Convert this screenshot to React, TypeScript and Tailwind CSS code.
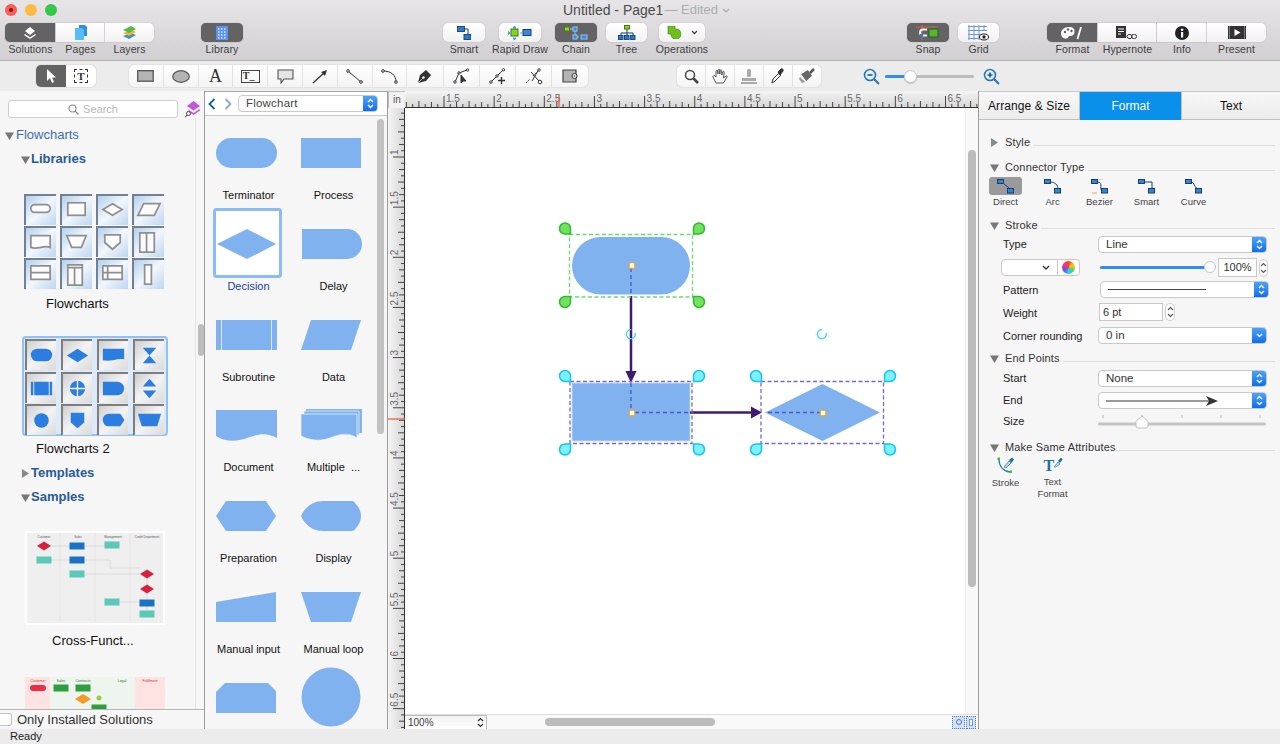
import React from "react";

const BLUE = "#7fb2ee";

function Chevrons() {
  return (
    <svg width="7" height="11" viewBox="0 0 7 11" fill="none" stroke="#fff" strokeWidth="1.4">
      <path d="M1 4 3.5 1.5 6 4M1 7 3.5 9.5 6 7" />
    </svg>
  );
}

function Select({ children, cls, single }: { children?: React.ReactNode; cls: string; single?: boolean }) {
  return (
    <div className={"flex items-center rounded-[4px] bg-white border border-[#c9c9c9] overflow-hidden text-[11.5px] text-[#333] " + cls}>
      <div className="flex-1 min-w-0 pl-[7px] pr-[4px] flex items-center">{children}</div>
      <div className="w-[14px] h-full bg-gradient-to-b from-[#4aa2fb] to-[#0d6fe8] flex items-center justify-center shrink-0">
        {single ? (
          <svg width="7" height="5" viewBox="0 0 7 5" fill="none" stroke="#fff" strokeWidth="1.4"><path d="M1 1 3.5 3.5 6 1" /></svg>
        ) : (
          <Chevrons />
        )}
      </div>
    </div>
  );
}

function Stepper({ cls }: { cls: string }) {
  return (
    <div className={"rounded-[5px] border border-[#cfcfcf] bg-white flex items-center justify-center shrink-0 " + cls}>
      <svg width="7" height="12" viewBox="0 0 7 12" fill="none" stroke="#555" strokeWidth="1.1"><path d="M1 4 3.5 1.5 6 4M1 8 3.5 10.5 6 8" /></svg>
    </div>
  );
}

function Tri({ open }: { open?: boolean }) {
  return (
    <svg width="9" height="9" viewBox="0 0 9 9" className="shrink-0">
      {open ? <polygon points="0,1.5 9,1.5 4.5,9" fill="#777" /> : <polygon points="1,0 8,4.5 1,9" fill="#888" />}
    </svg>
  );
}

/* ------- top toolbar ------- */
function TopBtn({ w, label, active, children, seg, first, last }: { w: string; label: string; active?: boolean; children: React.ReactNode; seg?: boolean; first?: boolean; last?: boolean }) {
  const radius = seg ? (first ? "rounded-l-[5px]" : last ? "rounded-r-[5px]" : "") : "rounded-[5px]";
  return (
    <div className={"flex flex-col items-center " + w}>
      <div className={"w-full h-[19px] flex items-center justify-center shadow-[0_0_1px_#00000066] " + radius + (active ? " bg-[#636363]" : " bg-gradient-to-b from-white to-[#f1f1f1]") + (seg && !last ? " border-r border-[#dcdcdc]" : "")}>
        {children}
      </div>
      <div className="text-[10.5px] leading-[14px] tracking-[0.1px] text-[#3d3d3d] whitespace-nowrap">{label}</div>
    </div>
  );
}

const Box = ({ x, y, c = "#2f7ac8", w = 7, h = 5 }: { x: number; y: number; c?: string; w?: number; h?: number }) => (
  <rect x={x} y={y} width={w} height={h} fill={c} stroke="#123f78" strokeWidth="0.9" />
);

function TopBar() {
  return (
    <div className="h-[61px] bg-gradient-to-b from-[#e7e5e7] to-[#d1cfd1] border-b border-[#b3b3b3] shrink-0">
      <div className="h-[22px] flex items-center">
        <div className="w-[563px] flex items-center gap-[8px] pl-[5px] shrink-0 -mt-[2px]">
          <div className="w-[12px] h-[12px] rounded-full bg-[#fc5b57] flex items-center justify-center"><div className="w-[4px] h-[4px] rounded-full bg-[#7e1512]" /></div>
          <div className="w-[12px] h-[12px] rounded-full bg-[#fdbc40]" />
          <div className="w-[12px] h-[12px] rounded-full bg-[#34c84a]" />
        </div>
        <div className="flex items-center text-[14px] text-[#4a4a4a] whitespace-nowrap -mt-[2px]">
          Untitled - Page1<span className="text-[#adadad] text-[13px] ml-[1px]">— Edited</span>
          <svg width="8" height="5" viewBox="0 0 8 5" fill="none" stroke="#adadad" strokeWidth="1.2" className="ml-[4px]"><path d="M1 1 4 4 7 1" /></svg>
        </div>
      </div>
      <div className="flex pl-[5px] mt-px">
        <div className="flex w-[149px]">
          <TopBtn w="w-[51px]" label="Solutions" active seg first>
            <svg width="14" height="14" viewBox="0 0 14 14" fill="#fff"><path d="M7 1 12 5 7 9 2 5Z" /><path d="M2 8 7 11.3 12 8 13 9 7 13 1 9Z" /></svg>
          </TopBtn>
          <TopBtn w="w-[49px]" label="Pages" seg>
            <svg width="13" height="15" viewBox="0 0 13 15"><path d="M5 0h6l2 2v9H5z" fill="#2c8fe0" /><path d="M1 3h7l2 2v10H1z" fill="#56bdf5" /></svg>
          </TopBtn>
          <TopBtn w="w-[49px]" label="Layers" seg last>
            <svg width="15" height="14" viewBox="0 0 15 14"><path d="M1 10 9 7l5 2-7 4z" fill="#3a8ad8" /><path d="M1 7 9 4l5 2-7 4z" fill="#f0b429" /><path d="M1 4 9 0l5 3-7 4z" fill="#58b947" /></svg>
          </TopBtn>
        </div>
        <div className="ml-[47px]">
          <TopBtn w="w-[42px]" label="Library" active>
            <svg width="12" height="14" viewBox="0 0 12 14"><rect width="12" height="14" rx="1" fill="#5a93f5" /><path d="M2 3h1.500M5 3h1.500M8 3h1.500M2 6h1.500M5 6h1.500M8 6h1.500M2 9h1.500M5 9h1.500M8 9h1.500M2 12h1.500M5 12h1.500M8 12h1.500" stroke="#dbe8ff" strokeWidth="1.5" /></svg>
          </TopBtn>
        </div>
        <div className="ml-[200px]">
          <TopBtn w="w-[42px]" label="Smart">
            <svg width="14" height="14" viewBox="0 0 14 14" fill="none"><path d="M7 3h4v6" stroke="#123f78" /><Box x={0.5} y={0.5} /><Box x={7} y={8.5} /></svg>
          </TopBtn>
        </div>
        <div className="ml-[14px]">
          <TopBtn w="w-[42px]" label="Rapid Draw">
            <svg width="24" height="14" viewBox="0 0 24 14"><path d="M5 2 6.500 0 8 2zM5 12l1.500 2L8 12zM2 7l-2-1.500V8.500zM12 7h2" fill="#36a3e8" stroke="#36a3e8" /><rect x="3" y="3" width="7" height="7" fill="#8bd11f" stroke="#3e7a12" /><rect x="15" y="3.500" width="8" height="6" fill="#3b87d8" stroke="#123f78" /></svg>
          </TopBtn>
        </div>
        <div className="ml-[14px]">
          <TopBtn w="w-[42px]" label="Chain" active>
            <svg width="24" height="14" viewBox="0 0 24 14" fill="none"><path d="M6 3h5v8h4" stroke="#8fc7f5" /><rect x="0.500" y="1" width="5" height="4" fill="#9bd11f" stroke="#4a7a12" /><rect x="9" y="9" width="4" height="4" fill="#3b87d8" stroke="#8fc7f5" /><rect x="17" y="9" width="6" height="4" fill="#3b87d8" stroke="#8fc7f5" /><rect x="9" y="1" width="4" height="4" fill="#3b87d8" stroke="#8fc7f5" /></svg>
          </TopBtn>
        </div>
        <div className="ml-[9px]">
          <TopBtn w="w-[41px]" label="Tree">
            <svg width="18" height="15" viewBox="0 0 18 15" fill="none"><path d="M9 4v4M3 12V8h12v4M9 8v4" stroke="#123f78" /><rect x="6.500" y="0.500" width="5" height="3.500" fill="#8bd11f" stroke="#3e7a12" /><Box x={0.5} y={10.5} w={4.5} h={4} /><Box x={6.5} y={10.5} w={4.5} h={4} /><Box x={12.5} y={10.5} w={4.5} h={4} /></svg>
          </TopBtn>
        </div>
        <div className="ml-[12px]">
          <TopBtn w="w-[46px]" label="Operations">
            <div className="flex items-center gap-[9px]">
              <svg width="15" height="13" viewBox="0 0 15 13"><path d="M1 0h7v3h1a5 5 0 1 1-5 6v-1H1z" fill="#6fc01e" stroke="#3e7a12" strokeWidth="0.6" /></svg>
              <svg width="7" height="5" viewBox="0 0 7 5" fill="none" stroke="#444" strokeWidth="1.3"><path d="M1 1 3.500 3.500 6 1" /></svg>
            </div>
          </TopBtn>
        </div>
        <div className="ml-[202px]">
          <TopBtn w="w-[42px]" label="Snap" active>
            <svg width="24" height="15" viewBox="0 0 24 15" fill="none"><path d="M0 2h22M6 0v15" stroke="#d9694a" /><path d="M11 4.500H7a3 3 0 0 0 0 6h4" stroke="#eee" strokeWidth="2" /><rect x="4" y="9" width="3" height="3" fill="#2f7ac8" /><rect x="13" y="4" width="9" height="8" fill="#60b224" stroke="#163" /></svg>
          </TopBtn>
        </div>
        <div className="ml-[9px]">
          <TopBtn w="w-[41px]" label="Grid">
            <svg width="21" height="16" viewBox="0 0 21 16" fill="none"><path d="M0 1.500h19M0 5.500h19M0 9.500h13M0 13.500h11M1 0v15M6 0v15M11 0v15M16 0v6" stroke="#6c94e3" /><ellipse cx="16" cy="12" rx="4.500" ry="3" fill="#fff" stroke="#222" /><circle cx="16" cy="12" r="1.700" fill="#222" /></svg>
          </TopBtn>
        </div>
        <div className="flex ml-[48px]">
          <TopBtn w="w-[51px]" label="Format" active seg first>
            <svg width="22" height="14" viewBox="0 0 22 14"><path d="M8 1C3 1 0 4 0 7.500S3 13 5.500 12.500 7 10 8.500 10 13 10 13.500 6 11 1 8 1Z" fill="#fff" /><circle cx="4" cy="6" r="1.200" fill="#636363" /><circle cx="7" cy="3.500" r="1.200" fill="#636363" /><circle cx="10.500" cy="5" r="1.200" fill="#636363" /><path d="M20 1 16.500 13" stroke="#fff" strokeWidth="1.800" /></svg>
          </TopBtn>
          <TopBtn w="w-[59px]" label="Hypernote" seg>
            <svg width="22" height="14" viewBox="0 0 22 14" fill="none"><rect x="0" y="0" width="10" height="12" fill="#333" /><path d="M2 3h6M2 5.500h6M2 8h3" stroke="#fff" /><rect x="11" y="8.500" width="5" height="4" rx="2" stroke="#333" /><rect x="15.500" y="8.500" width="5" height="4" rx="2" stroke="#333" /></svg>
          </TopBtn>
          <TopBtn w="w-[50px]" label="Info" seg>
            <svg width="14" height="14" viewBox="0 0 14 14"><circle cx="7" cy="7" r="7" fill="#222" /><rect x="6" y="6" width="2.200" height="5.500" fill="#fff" /><circle cx="7.100" cy="3.700" r="1.300" fill="#fff" /></svg>
          </TopBtn>
          <TopBtn w="w-[59px]" label="Present" seg last>
            <svg width="18" height="13" viewBox="0 0 18 13"><rect width="18" height="13" fill="#333" /><polygon points="6.500,3 12.500,6.500 6.500,10" fill="#fff" /><rect x="1" y="0" width="1" height="13" fill="#777" /><rect x="16" y="0" width="1" height="13" fill="#777" /></svg>
          </TopBtn>
        </div>
      </div>
    </div>
  );
}

/* ------- second toolbar ------- */
const toolIconsA: React.ReactNode[] = [
  <svg key="0" width="17" height="12" viewBox="0 0 17 12"><rect x="0.700" y="0.700" width="15.500" height="10.500" fill="#b4b4b4" stroke="#555" strokeWidth="1.300" /></svg>,
  <svg key="1" width="18" height="13" viewBox="0 0 18 13"><ellipse cx="9" cy="6.500" rx="8.300" ry="5.800" fill="#b4b4b4" stroke="#555" strokeWidth="1.200" /></svg>,
  <span key="2" className="font-['Liberation_Serif',serif] text-[18px] leading-none text-[#333]">A</span>,
  <div key="3" className="w-[19px] h-[13px] border border-[#444] flex items-center pl-[1px] font-['Liberation_Serif',serif] text-[10px] font-bold leading-none text-[#333]">T_</div>,
  <svg key="4" width="17" height="15" viewBox="0 0 17 15"><path d="M1 1h15v9H7l-3 4v-4H1z" fill="#e5e5e5" stroke="#555" strokeWidth="1.100" /></svg>,
  <svg key="5" width="16" height="15" viewBox="0 0 16 15" fill="none"><path d="M1 14 13 3" stroke="#333" strokeWidth="1.300" /><polygon points="15,1 9,3 13,7" fill="#333" /></svg>,
  <svg key="6" width="17" height="15" viewBox="0 0 17 15" fill="none" stroke="#333"><path d="M2 2 15 13" /><circle cx="2" cy="2" r="1.300" fill="#fff" /><circle cx="15" cy="13" r="1.300" fill="#fff" /></svg>,
  <svg key="7" width="17" height="15" viewBox="0 0 17 15" fill="none" stroke="#333"><path d="M2 2C10 2 15 6 15 13" /><circle cx="2" cy="2" r="1.300" fill="#fff" /><circle cx="15" cy="13" r="1.300" fill="#fff" /></svg>,
];
const toolIconsB: React.ReactNode[] = [
  <svg key="0" width="16" height="16" viewBox="0 0 16 16"><path d="M1 15 3 7 9 2l5 5-5 6z" fill="#333" /><circle cx="6.500" cy="9.500" r="1.200" fill="#fff" /><path d="M1 15 6 10" stroke="#fff" strokeWidth="0.600" /></svg>,
  <svg key="1" width="17" height="16" viewBox="0 0 17 16" fill="none" stroke="#333"><path d="M2 14 6 5 14 2" /><circle cx="2" cy="14" r="1.200" fill="#fff" /><circle cx="6" cy="5" r="1.200" fill="#fff" /><circle cx="14.500" cy="2" r="1.200" fill="#fff" /><path d="M8 7v8l2-2h3z" fill="#333" /></svg>,
  <svg key="2" width="17" height="16" viewBox="0 0 17 16" fill="none" stroke="#333"><path d="M2 14 14 2" /><circle cx="2" cy="14" r="1.200" fill="#fff" /><circle cx="8" cy="8" r="1.200" fill="#fff" /><circle cx="14.500" cy="1.800" r="1.200" fill="#fff" /><path d="M9 12.500h7M12.500 9v7" strokeWidth="1.400" /></svg>,
  <svg key="3" width="18" height="17" viewBox="0 0 18 17" fill="none" stroke="#333"><path d="M1 15 5 11M8 8l4-4" strokeDasharray="2 1" /><path d="M14 1 7 13M6 4l8 9" /><circle cx="15" cy="14" r="1.800" fill="#fff" /><circle cx="14" cy="2" r="1.200" fill="#fff" /></svg>,
  <svg key="4" width="16" height="14" viewBox="0 0 16 14"><path d="M1 1h13v12H1z" fill="#b4b4b4" stroke="#444" strokeWidth="1.200" /><circle cx="12.500" cy="7" r="2.500" fill="#eee" stroke="#333" /><circle cx="12.500" cy="7" r="0.700" fill="#333" /></svg>,
];
const toolIconsC: React.ReactNode[] = [
  <svg key="0" width="15" height="15" viewBox="0 0 15 15" fill="none"><circle cx="6" cy="6" r="4.500" fill="#fff" stroke="#444" strokeWidth="1.500" /><path d="M9.500 9.500 14 14" stroke="#444" strokeWidth="2.500" /></svg>,
  <svg key="1" width="16" height="16" viewBox="0 0 16 16" fill="#f7f7f7" stroke="#444" strokeWidth="0.900"><path d="M4 15 1 9c-.5-1 1-2 2-1l1 1V3c0-1 1.500-1 1.600 0l.4 3V2c0-1 1.500-1 1.600 0l.2 4 .4-3.500c.1-1 1.500-1 1.500 0L9.800 7l1-3c.3-1 1.700-.6 1.500.5l-1 5.500L14 8c1-.6 1.500.4 1 1l-3.500 6z" /></svg>,
  <svg key="2" width="16" height="15" viewBox="0 0 16 15" fill="#aaa"><rect x="6" y="0" width="4" height="8" rx="1.500" /><path d="M1 9h14v3H1z" /><rect x="0" y="13" width="16" height="2" /></svg>,
  <svg key="3" width="14" height="16" viewBox="0 0 14 16" fill="none"><path d="M1 15 2 11 8 5l2 2-6 6z" fill="#fff" stroke="#333" /><path d="M7 4 10 1c1-1 3 1 2 2L9 7z" fill="#333" stroke="#333" /></svg>,
  <svg key="4" width="16" height="16" viewBox="0 0 16 16"><path d="M8 2l5 5-5 6-6-6z" fill="#666" transform="rotate(8 8 8)" /><path d="M11 5 15 1" stroke="#555" strokeWidth="2.500" /><path d="M1 9l5 5-3 1-3-4z" fill="#999" /></svg>,
];

function ToolBar2() {
  return (
    <div className="h-[30px] bg-[#ececec] shrink-0 flex items-center pl-[36px]">
      <div className="flex h-[22px] rounded-[5px] shadow-[0_0_1px_#00000066] overflow-hidden bg-white">
        <div className="w-[30px] bg-[#636363] flex items-center justify-center">
          <svg width="10" height="14" viewBox="0 0 10 14" fill="#fff"><path d="M1 0v12l3-3 2 5 2-1-2-4.500h4z" /></svg>
        </div>
        <div className="w-[30px] flex items-center justify-center">
          <div className="w-[14px] h-[14px] border border-dashed border-[#333] flex items-center justify-center font-['Liberation_Serif',serif] text-[11px] font-bold text-[#333] leading-none">T</div>
        </div>
      </div>
      <div className="ml-[33px] flex h-[22px] rounded-[5px] shadow-[0_0_1px_#00000066] bg-gradient-to-b from-white to-[#f4f4f4]">
        {toolIconsA.map((ic, i) => (
          <div key={i} className="w-[34.8px] flex items-center justify-center border-r border-[#e2e2e2]">{ic}</div>
        ))}
        {toolIconsB.map((ic, i) => (
          <div key={i} className="w-[36.2px] flex items-center justify-center border-r border-[#e2e2e2] last:border-r-0">{ic}</div>
        ))}
      </div>
      <div className="ml-[89px] flex h-[22px] rounded-[5px] shadow-[0_0_1px_#00000066] bg-gradient-to-b from-white to-[#f4f4f4]">
        {toolIconsC.map((ic, i) => (
          <div key={i} className="w-[28.8px] flex items-center justify-center border-r border-[#e2e2e2] last:border-r-0">{ic}</div>
        ))}
      </div>
      <svg width="17" height="17" viewBox="0 0 17 17" fill="none" className="ml-[42px]"><circle cx="7" cy="7" r="5.500" fill="#e5eef8" stroke="#2d77b8" strokeWidth="1.600" /><path d="M4.500 7h5" stroke="#1d5a9e" strokeWidth="1.600" /><path d="M11 11l5 5" stroke="#2d77b8" strokeWidth="2.200" /></svg>
      <div className="ml-[5px] relative w-[89px] h-[3px] rounded-full bg-[#bdbdbd]">
        <div className="w-[20px] h-[3px] rounded-l-full bg-[#2f8ff0]" />
        <div className="absolute left-[19px] -top-[5px] w-[13px] h-[13px] rounded-full bg-white border border-[#c8c8c8] shadow-[0_1px_1px_#0000002e]" />
      </div>
      <svg width="17" height="17" viewBox="0 0 17 17" fill="none" className="ml-[9px]"><circle cx="7" cy="7" r="5.500" fill="#e5eef8" stroke="#2d77b8" strokeWidth="1.600" /><path d="M4.500 7h5M7 4.500v5" stroke="#1d5a9e" strokeWidth="1.600" /><path d="M11 11l5 5" stroke="#2d77b8" strokeWidth="2.200" /></svg>
    </div>
  );
}

/* ------- solutions panel ------- */
const outline = "#8f8f8f";
const g1: React.ReactNode[] = [
  <rect key="a" x="5" y="9" width="20" height="8" rx="4" />,
  <rect key="b" x="6" y="7" width="18" height="13" />,
  <polygon key="c" points="5,14 15,8 25,14 15,20" />,
  <polygon key="d" points="4,20 10,8 27,8 21,20" />,
  <path key="e" d="M5 8h20v12c-7-3-12 3-20 0z" />,
  <polygon key="f" points="5,8 25,8 20,20 10,20" />,
  <polygon key="g" points="7,7 23,7 23,15 15,22 7,15" />,
  <path key="h" d="M6 5h15v20H6zM13 5v20" />,
  <path key="i" d="M5 6h20v14H5zM5 13h20" />,
  <path key="j" d="M6 5h15v21H6zM13 8v18M6 8h15" />,
  <path key="k" d="M5 6h20v14H5zM5 13h20M10 6v14" />,
  <rect key="l" x="11" y="5" width="7" height="20" />,
];
const g2: React.ReactNode[] = [
  <rect key="a" x="4" y="8" width="22" height="13" rx="6.500" />,
  <polygon key="b" points="4,15 15,8 26,15 15,22" />,
  <path key="c" d="M4 8h22v11c-8-2-12 3-22 1z" />,
  <path key="d" d="M8 7h14L15 15l7 8H8l7-8z" />,
  <path key="e" fillRule="evenodd" d="M4 8h22v14H4zM6.500 8v14h1V8zM22.500 8v14h1V8z" />,
  <path key="f" fillRule="evenodd" d="M15 7a8 8 0 1 1 0 16 8 8 0 0 1 0-16zM14.300 7v7.300H7v1.400h7.300V23h1.400v-7.300H23v-1.400h-7.300V7z" />,
  <path key="g" d="M4 8h15a7 7 0 0 1 0 14H4z" />,
  <path key="h" d="M15 5 22 13H8zM15 25 8 17h14z" />,
  <circle key="i" cx="15" cy="15" r="7.500" />,
  <polygon key="j" points="8,7 22,7 22,17 15,23 8,17" />,
  <path key="k" d="M10 8h12l4 6v1l-4 6H10a6 6 0 0 1-6-6.500A6 6 0 0 1 10 8z" />,
  <polygon key="l" points="3,8 27,8 23,21 7,21" />,
];

function Thumbs1() {
  return (
    <div className="ml-[24px] grid grid-cols-[repeat(4,31.500px)] gap-x-[4.500px] gap-y-px w-fit">
      {g1.map((s, i) => (
        <div key={i} className="h-[31px] bg-gradient-to-br from-[#b4cfec] via-[#f2f7fc] to-[#bcd5ee] border-t-2 border-l-2 border-[#6f8192]">
          <svg width="29" height="29" viewBox="0 0 30 30" fill="#fbfbfb" stroke={outline} strokeWidth="1.800">{s}</svg>
        </div>
      ))}
    </div>
  );
}

function Thumbs2() {
  return (
    <div className="ml-[22px] w-[146px] h-[100px] rounded-[4px] border-2 border-[#8fc0f7] bg-[#dbe9f8] pt-[1px] pl-[1px] grid grid-cols-[repeat(4,31px)] gap-x-[5px] gap-y-[1.500px]">
      {g2.map((s, i) => (
        <div key={i} className="h-[31px] bg-gradient-to-br from-[#cfcfcf] via-[#f4f4f4] to-[#d9d9d9] border-t-2 border-l-2 border-[#7e7e7e]">
          <svg width="29" height="29" viewBox="0 0 30 30" fill="#2b7de0">{s}</svg>
        </div>
      ))}
    </div>
  );
}

const T = ({ x, y, c = "#5cc8b8", w = 15, h = 7 }: { x: number; y: number; c?: string; w?: number; h?: number }) => <rect x={x - w / 2} y={y - h / 2} width={w} height={h} fill={c} />;
const D = ({ x, y, c = "#d8203d" }: { x: number; y: number; c?: string }) => <polygon points={`${x - 7},${y} ${x},${y - 4.500} ${x + 7},${y} ${x},${y + 4.500}`} fill={c} />;

function SolutionsPanel() {
  return (
    <div className="w-[205px] shrink-0 border-r border-[#9c9c9c] bg-[#f6f6f6] flex flex-col relative">
      <div className="h-[27px] shrink-0 flex items-end pl-[8px]">
        <div className="w-[170px] h-[18px] bg-white rounded-[3px] border border-[#cfcfcf] flex items-center justify-center gap-[4px] text-[11px] text-[#b9b9b9]">
          <svg width="11" height="11" viewBox="0 0 11 11" fill="none" stroke="#888" strokeWidth="1.100"><circle cx="4.500" cy="4.500" r="3.500" /><path d="M7 7l3.500 3.500" /></svg>
          Search
        </div>
        <svg width="15" height="17" viewBox="0 0 15 17" className="ml-[7px]"><path d="M8.500 0 15 5l-6.500 4.500L2 5z" fill="#c454d8" /><path d="M2.500 8 8.500 12l6-4 .5 1.500L8.500 14 5 11.500z" fill="#c454d8" /><circle cx="3.500" cy="12.500" r="2" fill="#fff" stroke="#333" strokeWidth="0.900" /><path d="M2 14 0 16.500" stroke="#333" strokeWidth="1" /></svg>
      </div>
      <div className="flex-1 min-h-0 overflow-hidden border-r border-[#e4e4e4] w-[196px]">
        <div className="mt-[9px] h-[16px] pl-[5px] flex items-center gap-[2px] text-[13px] text-[#3d6fa8]"><Tri open />Flowcharts</div>
        <div className="mt-[8px] h-[16px] pl-[21px] flex items-center gap-[1px] text-[13px] font-bold text-[#285a9c]"><Tri open />Libraries</div>
        <div className="mt-[27px]"><Thumbs1 /></div>
        <div className="mt-[8px] pl-[46px] h-[14px] text-[13px] leading-[14px] text-[#111]">Flowcharts</div>
        <div className="mt-[25px]"><Thumbs2 /></div>
        <div className="mt-[6px] pl-[36px] h-[14px] text-[13px] leading-[14px] text-[#111]">Flowcharts 2</div>
        <div className="mt-[9px] h-[16px] pl-[21px] flex items-center gap-[1px] text-[13px] font-bold text-[#285a9c]"><Tri />Templates</div>
        <div className="mt-[8px] h-[16px] pl-[21px] flex items-center gap-[1px] text-[13px] font-bold text-[#285a9c]"><Tri open />Samples</div>
        <div className="mt-[26px] ml-[25px] w-[140px] h-[94px] border-2 border-white bg-[#efefef]">
          <svg width="136" height="90" viewBox="2 2 136 90">
            <g fontSize="3" fill="#555" fontFamily="Liberation Sans, sans-serif" textAnchor="middle"><text x="19" y="7">Customer</text><text x="53" y="7">Sales</text><text x="88" y="7">Management</text><text x="122" y="7">Credit Department</text></g>
            <path d="M35 2v90M70 2v90M105 2v90" stroke="#e4e4e4" />
            <path d="M26 15h19M60 15h22M26 29h19M60 43h55M60 29h25V37h30M122 47v7M122 62v6M95 71h20M122 76v3" stroke="#cfcfcf" strokeWidth="0.600" fill="none" />
            <D x={19} y={15} /><T x={52} y={15} c="#1a72c4" /><T x={87} y={14} /><T x={19} y={29} /><T x={52} y={29} c="#1a72c4" /><T x={52} y={43} /><D x={122} y={43} /><D x={122} y={58} /><T x={122} y={72} c="#1a72c4" /><T x={87} y={71} /><T x={122} y={83} />
          </svg>
        </div>
        <div className="mt-[8px] pl-[52px] h-[15px] text-[13px] leading-[15px] text-[#111]">Cross-Funct...</div>
        <div className="mt-[29px] ml-[25px] w-[140px] h-[94px] flex relative">
          <svg width="140" height="94" viewBox="0 0 140 94">
            <rect width="140" height="94" fill="#eef5ee" /><rect width="25" height="94" fill="#ffe3e3" /><rect x="110" width="30" height="94" fill="#ffe3e3" />
            <g fontSize="3.500" fontFamily="Liberation Sans, sans-serif" textAnchor="middle" fill="#c33"><text x="13" y="5">Customer</text><text x="36" y="5" fill="#373">Sales</text><text x="58" y="5" fill="#373">Contracts</text><text x="97" y="5" fill="#373">Legal</text><text x="125" y="5">Fulfilment</text></g>
            <rect x="5" y="8" width="16" height="6" rx="3" fill="#ef2b45" /><T x={36} y={11} c="#2f9e3f" /><T x={58} y={11} c="#2f9e3f" />
            <polygon points="50,22 58,17 66,22 58,27" fill="#f59a23" /><circle cx="74" cy="21" r="2.500" fill="#9ccc3c" /><T x={74} y={31} c="#2f9e3f" />
          </svg>
        </div>
      </div>
      <div className="absolute left-[198px] top-[233px] w-[6px] h-[32px] rounded-full bg-[#bdbdbd]" />
      <div className="absolute left-0 right-0 bottom-0 h-[20px] bg-[#f6f6f6] border-t border-[#b5b5b5] flex items-center">
        <div className="w-[12px] h-[13px] bg-white border border-[#c2c2c2] border-l-0 rounded-r-[3px]" />
        <span className="ml-[5px] text-[13px] text-[#333] whitespace-nowrap">Only Installed Solutions</span>
      </div>
    </div>
  );
}

/* ------- library ------- */
const S = { fill: BLUE };
const shapes: { label: string; el: React.ReactNode; blue?: boolean }[] = [
  { label: "Terminator", el: <rect x="0" y="16" width="61" height="30" rx="15" {...S} /> },
  { label: "Process", el: <rect x="0" y="16" width="60" height="30" {...S} /> },
  { label: "Decision", blue: true, el: <><rect x="-1.500" y="-3.500" width="66" height="67" rx="2" fill="#fff" stroke="#8cbcf5" strokeWidth="3" /><polygon points="1,31 31,16 60,31 31,46" {...S} /></> },
  { label: "Delay", el: <path d="M1 16H46A15 15 0 0 1 46 46H1Z" {...S} /> },
  { label: "Subroutine", el: <><rect x="0" y="16" width="61" height="30" {...S} /><path d="M5.500 16v30M55.500 16v30" stroke="#dceafb" strokeWidth="1" /></> },
  { label: "Data", el: <polygon points="0,46 10,16 60,16 50,46" {...S} /> },
  { label: "Document", el: <path d="M0 16H61V44C50 38 42 40 31 44C20 48 10 48 0 42Z" {...S} /> },
  { label: "Multiple  ...", el: <><path d="M5 15H61V39H5Z" {...S} /><path d="M3 17H58V41H3Z" fill={BLUE} stroke="#f6f6f6" strokeWidth="0.700" /><path d="M0 20H56V44C47 38 40 40 29 44C18 48 8 46 0 42Z" fill={BLUE} stroke="#f6f6f6" strokeWidth="0.700" /></> },
  { label: "Preparation", el: <polygon points="0,31 10,16 50,16 60,31 50,46 10,46" {...S} /> },
  { label: "Display", el: <path d="M0 31C4 22 12 16 22 16H52C57 20 60 26 60 31C60 36 57 42 52 46H22C12 46 4 40 0 31Z" {...S} /> },
  { label: "Manual input", el: <polygon points="0,26 60,16 60,46 0,46" {...S} /> },
  { label: "Manual loop", el: <polygon points="0,16 60,16 50,46 10,46" {...S} /> },
  { label: "", el: <polygon points="0,25 9,16 52,16 60,24 60,46 0,46" {...S} /> },
  { label: "", el: <circle cx="30" cy="30" r="29.500" {...S} /> },
];

function LibraryPanel() {
  return (
    <div className="w-[183px] shrink-0 border-r border-[#9c9c9c] border-t border-t-[#a8a8a8] bg-[#f6f6f6] flex flex-col relative overflow-hidden">
      <div className="h-[24px] shrink-0 bg-white border-b border-[#c9c9c9] flex items-center">
        <svg width="8" height="12" viewBox="0 0 8 12" fill="none" stroke="#1d5a9e" strokeWidth="1.800" className="ml-[3px]"><path d="M6.500 1 1.500 6l5 5" /></svg>
        <svg width="8" height="12" viewBox="0 0 8 12" fill="none" stroke="#8fa9c9" strokeWidth="1.800" className="ml-[8px]"><path d="M1.500 1l5 5-5 5" /></svg>
        <Select cls="ml-[6px] w-[140px] h-[17px]"><span className="text-[#444] tracking-[0.2px]">Flowchart</span></Select>
      </div>
      <div className="grid grid-cols-[85px_85px] pl-[1px]">
        {shapes.map((s, i) => (
          <div key={i} className="h-[90.8px] pt-[6px] flex flex-col items-center">
            <svg width="62" height="62" viewBox="0 0 62 62" className="mr-[4px] overflow-visible shrink-0">{s.el}</svg>
            {s.label && <div className={"mt-[4px] h-[14px] text-[11px] leading-[14px] whitespace-pre " + (s.blue ? "text-[#22409c]" : "text-[#111]")}>{s.label}</div>}
          </div>
        ))}
      </div>
      <div className="absolute left-[172px] top-[27px] w-[7px] h-[315px] rounded-full bg-[#c2c2c2]" />
    </div>
  );
}

/* ------- canvas ------- */
function TopRuler() {
  const els: React.ReactNode[] = [];
  for (let i = 18; i <= 110; i++) {
    const x = 39 + ((i / 16 - 1.5) * 100.3);
    const h = i % 8 === 0 ? 11 : i % 4 === 0 ? 6 : i % 2 === 0 ? 5 : 3;
    els.push(<line key={i} x1={x} x2={x} y1={16 - h} y2={16} stroke="#333" strokeWidth="0.900" />);
    if (i % 8 === 0) {
      els.push(<text key={"t" + i} x={x + 2} y={11} fontSize="10" fill="#6a6a6a" fontFamily="Liberation Sans, sans-serif">{String(i / 16)}</text>);
    }
  }
  return (
    <svg width="573" height="17" viewBox="0 0 573 17" className="bg-gradient-to-b from-[#f4f4f4] to-[#d6d6d6]">
      {els}
      <line x1="0" x2="573" y1="16.500" y2="16.500" stroke="#333" />
      <line x1="154" x2="154" y1="3" y2="17" stroke="#e8553e" strokeWidth="1.200" />
    </svg>
  );
}

function LeftRuler() {
  const els: React.ReactNode[] = [];
  for (let i = 5; i <= 112; i++) {
    const y = 49 + ((i / 16 - 1) * 100.3);
    if (y > 621) break;
    const w = i % 8 === 0 ? 11 : i % 4 === 0 ? 6 : i % 2 === 0 ? 5 : 3;
    els.push(<line key={i} y1={y} y2={y} x1={16 - w} x2={16} stroke="#333" strokeWidth="0.900" />);
    if (i % 8 === 0 && y > 30 && y < 610) {
      els.push(<text key={"t" + i} transform={`translate(10 ${y - 2}) rotate(-90)`} fontSize="10" fill="#6a6a6a" fontFamily="Liberation Sans, sans-serif">{String(i / 16)}</text>);
    }
  }
  return (
    <svg width="17" height="621" viewBox="0 0 17 621" className="bg-gradient-to-r from-[#f4f4f4] to-[#d6d6d6] shrink-0">
      {els}
      <line y1="0" y2="621" x1="16.500" x2="16.500" stroke="#333" />
      <line x1="0" x2="17" y1="311" y2="311" stroke="#e8553e" strokeWidth="1.200" />
    </svg>
  );
}

const Handle = ({ x, y, rot, c }: { x: number; y: number; rot: number; c: "g" | "b" }) => (
  <path d="M0 0H-5.500A5.500 5.500 0 1 1 0 -5.500Z" transform={`translate(${x} ${y}) rotate(${rot})`} fill={c === "g" ? "#73e05f" : "#7df1ff"} stroke={c === "g" ? "#2dbd2d" : "#12c4f7"} strokeWidth="1.500" />
);
const Corners = ({ x1, y1, x2, y2, c }: { x1: number; y1: number; x2: number; y2: number; c: "g" | "b" }) => (
  <>
    <Handle x={x1} y={y1} rot={0} c={c} />
    <Handle x={x2} y={y1} rot={90} c={c} />
    <Handle x={x2} y={y2} rot={180} c={c} />
    <Handle x={x1} y={y2} rot={270} c={c} />
  </>
);
const Center = ({ x, y }: { x: number; y: number }) => <rect x={x - 2.800} y={y - 2.800} width="5.600" height="5.600" fill="#fff" stroke="#eba22b" strokeWidth="1.200" />;
const Rot = ({ x, y }: { x: number; y: number }) => <path d="M3.500 2.500A4.500 4.500 0 1 1 3.500 -2.500" transform={`translate(${x} ${y}) rotate(-50)`} fill="none" stroke="#33d6f5" strokeWidth="1.300" />;

function Diagram() {
  // Coordinates are page coordinates translated to the canvas origin (405,108)
  return (
    <svg width="560" height="606" viewBox="405 108 560 606" className="absolute left-0 top-0">
      <rect x="572" y="237" width="118" height="57.500" rx="28.700" fill={BLUE} />
      <rect x="572" y="383" width="118" height="58" fill={BLUE} stroke="#cbdff8" strokeWidth="0.800" />
      <polygon points="765,412.500 822.500,384 880,412.500 822.500,441" fill={BLUE} />
      <path d="M631 296V371" stroke="#401a70" strokeWidth="2.500" />
      <polygon points="625.500,371 636.500,371 631,383" fill="#401a70" />
      <path d="M690 412.500H752" stroke="#401a70" strokeWidth="2.500" />
      <polygon points="751,406.500 751,418.500 762,412.500" fill="#401a70" />
      <rect x="569.500" y="234.500" width="123" height="62.500" fill="none" stroke="#6edb6e" strokeWidth="1.300" strokeDasharray="4 2.500" />
      <rect x="570" y="381.500" width="122" height="62" fill="none" stroke="#7466dc" strokeWidth="1.300" strokeDasharray="4 2.500" />
      <rect x="761" y="381.500" width="122.500" height="62" fill="none" stroke="#7466dc" strokeWidth="1.300" strokeDasharray="4 2.500" />
      <path d="M631 268V296M631 383V410M635 412.500H690M768 412.500H820" fill="none" stroke="#4f55d0" strokeWidth="1.300" strokeDasharray="4 3" />
      <Corners x1={570.500} y1={234} x2={693.500} y2={296.500} c="g" />
      <Corners x1={570.500} y1={381.500} x2={693.500} y2={444} c="b" />
      <Corners x1={761.500} y1={381.500} x2={884.500} y2={444} c="b" />
      <Center x={632} y={265.500} />
      <Center x={632} y={413} />
      <Center x={823} y={413} />
      <Rot x={631} y={334} />
      <Rot x={822} y={334} />
    </svg>
  );
}

function CanvasColumn() {
  return (
    <div className="w-[590px] shrink-0 flex flex-col bg-white">
      <div className="flex h-[17px] shrink-0">
        <div className="w-[17px] h-[17px] bg-[#f3f3f3] border-t border-l border-[#bdbdbd] flex items-center justify-center text-[10px] leading-[12px] text-[#555]">in</div>
        <TopRuler />
      </div>
      <div className="flex flex-1 min-h-0">
        <LeftRuler />
        <div className="flex-1 flex flex-col min-w-0">
          <div className="flex-1 flex min-h-0">
            <div className="flex-1 relative overflow-hidden"><Diagram /></div>
            <div className="w-[13px] bg-[#f8f8f8] border-l border-[#ededed] pl-[2px] shrink-0">
              <div className="mt-[42px] w-[8px] h-[437px] rounded-full bg-[#bcbcbc]" />
            </div>
          </div>
          <div className="h-[15px] shrink-0 bg-[#f9f9f9] border-t border-[#dedede] flex items-center relative">
            <div className="w-[82px] h-full bg-gradient-to-b from-[#f2f2f2] to-white border-r border-t border-[#bcbcbc] flex items-center justify-between pl-[3px] pr-[2px] text-[10px] text-[#444]">
              100%
              <svg width="7" height="11" viewBox="0 0 7 11" fill="none" stroke="#333" strokeWidth="1.200"><path d="M1 4 3.500 1.500 6 4M1 7 3.500 9.500 6 7" /></svg>
            </div>
            <div className="ml-[58px] w-[170px] h-[8px] rounded-full bg-[#bcbcbc]" />
            <div className="ml-[237px] flex items-center gap-[1px]">
              <div className="w-[13px] h-[13px] bg-[#cfe0f7] border border-dotted border-[#5577bb] flex items-center justify-center"><div className="w-[6px] h-[6px] rounded-full border border-[#5577bb]" /></div>
              <div className="w-[10px] h-[13px] bg-[#cfe0f7] border border-dotted border-[#5577bb] flex items-center justify-center"><div className="w-[4px] h-[7px] border border-[#7799cc] bg-white" /></div>
            </div>
          </div>
        </div>
      </div>
    </div>
  );
}

/* ------- format panel ------- */
function Heading({ label, open = true, cls }: { label: string; open?: boolean; cls: string }) {
  return (
    <div className={"h-[14px] flex items-center pl-[11px] text-[11px] text-[#333] " + cls}>
      <Tri open={open} />
      <span className="ml-[6px] whitespace-nowrap tracking-[0.15px]">{label}</span>
      <div className="flex-1 h-px bg-[#dddddd] ml-[3px] mr-[5px] mt-[7px]" />
    </div>
  );
}

const Lbl = ({ children }: { children: React.ReactNode }) => <div className="w-[119px] pl-[24px] shrink-0 text-[11px] text-[#222] whitespace-nowrap">{children}</div>;

const connIcons: { label: string; path: string; extra?: React.ReactNode }[] = [
  { label: "Direct", path: "M6 4 13 10" },
  { label: "Arc", path: "M6 3C11 3 14 6 14 10" },
  { label: "Bezier", path: "M6 3C14 3 6 12 13 12", extra: <path d="M8 0h4M1 14h5" stroke="#e89a2a" strokeWidth="0.800" /> },
  { label: "Smart", path: "M6 3H14V10" },
  { label: "Curve", path: "M6 3C10 3 9 10 14 10" },
];

function Conn({ i }: { i: number }) {
  const c = connIcons[i];
  return (
    <svg width="17" height="15" viewBox="0 0 17 15" fill="none">
      <path d={c.path} stroke="#123f78" strokeWidth="1" />
      {c.extra}
      <rect x="0.500" y="0.500" width="6" height="4" fill="#3b82c8" stroke="#123f78" />
      <rect x="10.500" y="9.500" width="6" height="4.500" fill="#3b82c8" stroke="#123f78" />
    </svg>
  );
}

function FormatPanel() {
  return (
    <div className="flex-1 min-w-0 border-l border-[#9c9c9c] bg-[#f6f6f6] flex flex-col">
      <div className="h-[29px] shrink-0 flex text-[12px] border-t border-[#c9c9c9]">
        <div className="w-[101px] bg-gradient-to-b from-[#f7f7f7] to-[#ececec] border-b border-r border-[#bfbfbf] flex items-center justify-center text-[#111] tracking-[0.1px] pt-[1px]">Arrange &amp; Size</div>
        <div className="w-[101px] bg-[#0a90ea] flex items-center justify-center text-white">Format</div>
        <div className="flex-1 bg-gradient-to-b from-[#f7f7f7] to-[#ececec] border-b border-l border-[#bfbfbf] flex items-center justify-center text-[#111] pt-[1px]">Text</div>
      </div>
      <Heading label="Style" open={false} cls="mt-[15px]" />
      <Heading label="Connector Type" cls="mt-[11px]" />
      <div className="mt-[3px] flex pl-[3px]">
        {connIcons.map((c, i) => (
          <div key={c.label} className="w-[47px] flex flex-col items-center">
            <div className={"w-[33px] h-[18px] rounded-[3px] flex items-center justify-center " + (i === 0 ? "bg-[#9a9a9a]" : "")}><Conn i={i} /></div>
            <div className="h-[14px] text-[9.5px] leading-[14px] text-[#444]">{c.label}</div>
          </div>
        ))}
      </div>
      <Heading label="Stroke" cls="mt-[9px]" />
      <div className="mt-[4px] h-[17px] flex items-center"><Lbl>Type</Lbl><Select cls="w-[169px] h-[17px]">Line</Select></div>
      <div className="mt-[5px] h-[19px] flex items-center">
        <div className="ml-[22px] w-[79px] h-[17px] bg-white rounded-[4px] border border-[#c9c9c9] flex items-center">
          <div className="flex-1 flex justify-end pr-[7px]"><svg width="8" height="5" viewBox="0 0 8 5" fill="none" stroke="#333" strokeWidth="1.400"><path d="M1 1 4 4 7 1" /></svg></div>
          <div className="w-[22px] h-full border-l border-[#c9c9c9] flex items-center justify-center">
            <div className="w-[13px] h-[13px] rounded-full bg-[conic-gradient(#ff3b30,#ffcc00,#4cd964,#34c3ff,#5856d6,#ff2d92,#ff3b30)]" />
          </div>
        </div>
        <div className="ml-[20px] w-[110px] h-[3px] rounded-full bg-[#2f8ff0] relative">
          <div className="absolute -right-[6px] -top-[5px] w-[12px] h-[12px] rounded-full bg-white border border-[#c8c8c8]" />
        </div>
        <div className="ml-[8px] w-[39px] h-[19px] bg-white border border-[#c9c9c9] text-[11px] leading-[17px] text-center text-[#333]">100%</div>
        <Stepper cls="ml-[2px] w-[9px] h-[18px]" />
      </div>
      <div className="mt-[4px] h-[17px] flex items-center">
        <div className="w-[119px] pl-[24px] pt-[2px] shrink-0 text-[11px] text-[#222]">Pattern</div>
        <Select cls="ml-[2px] w-[169px] h-[17px]"><div className="w-[98px] h-px bg-[#444] my-[7px]" /></Select>
      </div>
      <div className="mt-[5px] h-[18px] flex items-center">
        <div className="w-[119px] pl-[24px] pt-[2px] shrink-0 text-[11px] text-[#222]">Weight</div>
        <div className="ml-[1px] w-[64px] h-[18px] bg-white border border-[#c9c9c9] text-[11px] leading-[16px] pl-[3px] text-[#333]">6 pt</div>
        <Stepper cls="ml-[2px] w-[10px] h-[18px]" />
      </div>
      <div className="mt-[6px] h-[17px] flex items-center">
        <div className="w-[119px] pl-[24px] pt-[2px] shrink-0 text-[11px] text-[#222] whitespace-nowrap">Corner rounding</div>
        <Select single cls="w-[169px] h-[17px]">0 in</Select>
      </div>
      <Heading label="End Points" cls="mt-[7px]" />
      <div className="mt-[5px] h-[17px] flex items-center"><Lbl>Start</Lbl><Select cls="w-[169px] h-[17px]">None</Select></div>
      <div className="mt-[5px] h-[17px] flex items-center">
        <Lbl>End</Lbl>
        <Select cls="w-[169px] h-[17px]">
          <svg width="113" height="10" viewBox="0 0 113 10"><path d="M0 5H103" stroke="#333" /><polygon points="100,0 112,5 100,10 103,5" fill="#333" /></svg>
        </Select>
      </div>
      <div className="mt-[4px] h-[16px] flex items-center">
        <Lbl>Size</Lbl>
        <div className="relative w-[168px] h-[16px]">
          <svg width="168" height="16" viewBox="0 0 168 16" className="absolute left-0 top-0">
            <path d="M5 2v3M44 2v3M84 2v3M123 2v3M162 2v3" stroke="#b5b5b5" />
            <rect x="0" y="9.500" width="168" height="3" rx="1.500" fill="#c4c4c4" />
            <path d="M38 13V8.500L44 3 50 8.500V13a2 2 0 0 1-2 2H40a2 2 0 0 1-2-2Z" fill="#fff" stroke="#c0c0c0" />
          </svg>
        </div>
      </div>
      <Heading label="Make Same Attributes" cls="mt-[11px]" />
      <div className="mt-[3px] flex pl-[3px]">
        <div className="w-[47px] flex flex-col items-center">
          <svg width="18" height="18" viewBox="0 0 18 18" fill="none"><path d="M2 2C2 9 6 14 13 15" stroke="#1f7fb0" strokeWidth="1.300" /><rect x="0.500" y="0.500" width="2.500" height="2.500" fill="#3cc13c" /><rect x="12.500" y="13.500" width="2.500" height="2.500" fill="#3cc13c" /><path d="M7 10 12 4l2 2-5 5z" fill="#bcd6ea" stroke="#1f6f9f" strokeWidth="0.700" /><path d="M12 3l3-2.500 2 2L14.500 6z" fill="#1f6f9f" /></svg>
          <div className="mt-[1px] text-[9.5px] leading-[13px] text-[#444]">Stroke</div>
        </div>
        <div className="w-[47px] flex flex-col items-center">
          <div className="relative w-[18px] h-[18px] flex">
            <span className="font-['Liberation_Serif',serif] font-bold text-[16px] leading-[18px] text-[#1f6f9f]">T</span>
            <svg width="10" height="11" viewBox="0 0 10 11" fill="none" className="absolute right-[-1px] top-0"><path d="M1 10 5 5l2 2-4 3z" fill="#bcd6ea" stroke="#1f6f9f" strokeWidth="0.600" /><path d="M5 4 8 0.500l1.500 2L7 6z" fill="#1f6f9f" /></svg>
          </div>
          <div className="mt-[1px] text-[9.5px] leading-[12px] text-center text-[#444]">Text<br />Format</div>
        </div>
      </div>
    </div>
  );
}

export default function App() {
  return (
    <div className="w-[1280px] h-[744px] overflow-hidden flex flex-col font-['Liberation_Sans',sans-serif] bg-[#ececec]">
      <TopBar />
      <ToolBar2 />
      <div className="h-[638px] shrink-0 flex overflow-hidden">
        <SolutionsPanel />
        <LibraryPanel />
        <CanvasColumn />
        <FormatPanel />
      </div>
      <div className="h-[15px] shrink-0 bg-[#ececec] pl-[10px] text-[11px] leading-[15px] text-[#222]">Ready</div>
    </div>
  );
}
